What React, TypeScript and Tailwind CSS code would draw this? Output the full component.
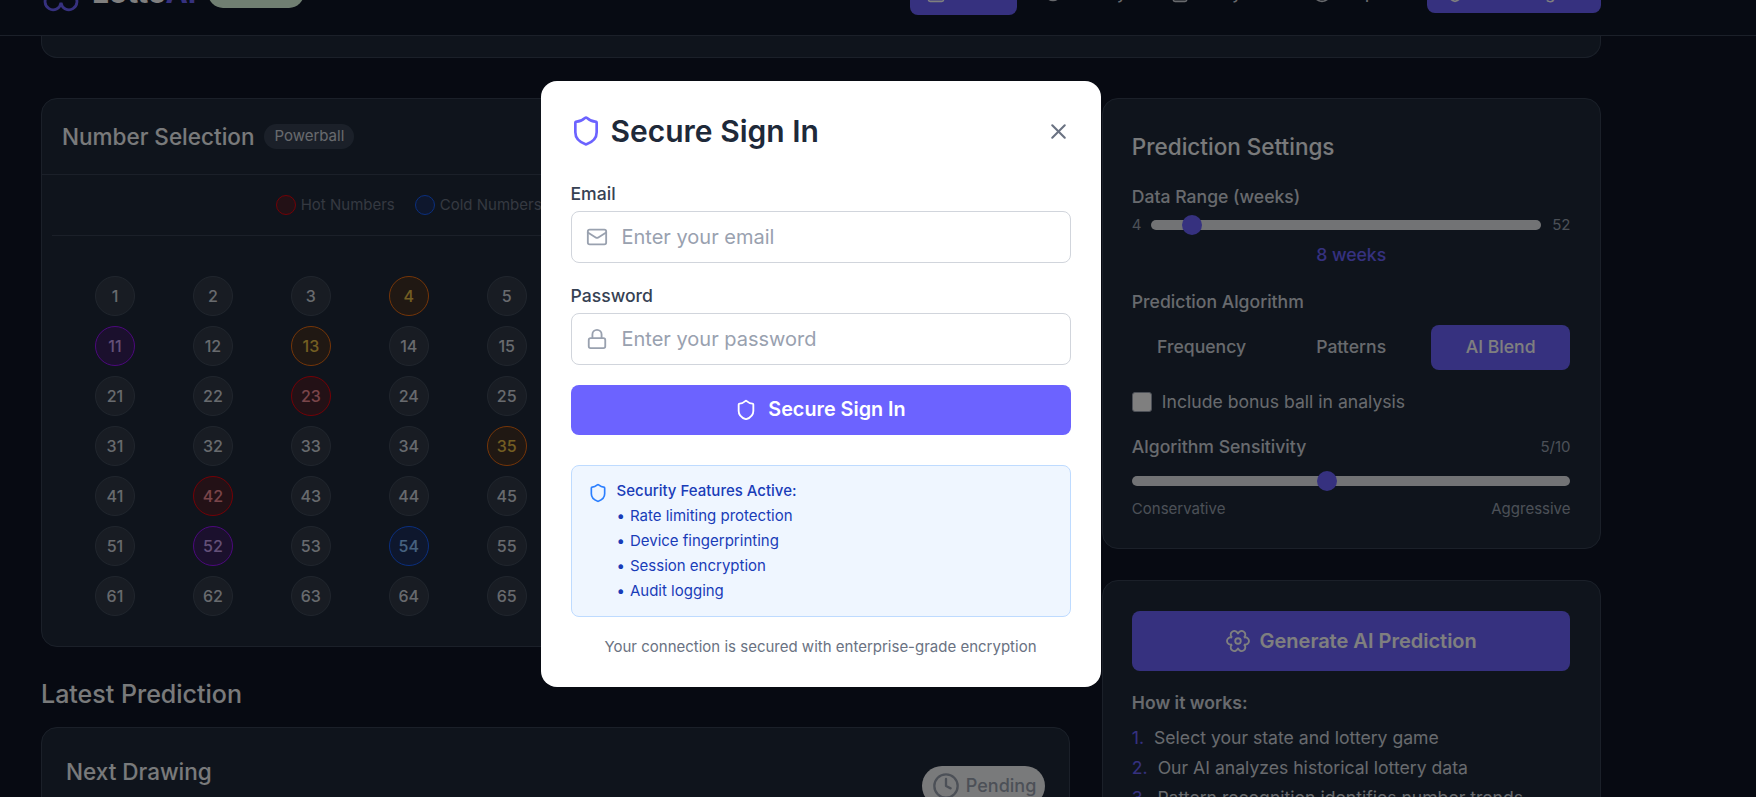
import React from "react";
import { Calendar, CircleHelp, Clock, FileText, History, Lock, Mail, Shield, X } from "lucide-react";

const orange = "bg-yellow-900/40 border-[#ea6a10] text-[#e6bc45]";
const purple = "bg-purple-900/40 border-purple-600 text-[#c8a0f0]";
const red = "bg-red-900/40 border-red-600 text-[#f38b94]";
const blue = "bg-blue-900/40 border-blue-600 text-blue-300";

const hot: Record<number, string> = {
  4: orange,
  13: orange,
  35: orange,
  11: purple,
  52: purple,
  23: red,
  42: red,
  54: blue,
};

const numbers = Array.from({ length: 69 }, (_, i) => i + 1);

// icone a six lobes du logo et du bouton de generation
function FlowerCog({ size, stroke = 2, className }: { size: number; stroke?: number; className?: string }) {
  return (
    <svg width={size} height={size} viewBox="-1 -1 26 26" fill="none" stroke="currentColor" strokeWidth={stroke} className={className}>
      <path d="M12 4.6A4 4 0 1 1 18.41 8.3A4 4 0 1 1 18.41 15.7A4 4 0 1 1 12 19.4A4 4 0 1 1 5.59 15.7A4 4 0 1 1 5.59 8.3A4 4 0 1 1 12 4.6Z" />
      <circle cx="12" cy="12" r="3" />
    </svg>
  );
}

function Legend({ dot, label }: { dot: string; label: string }) {
  return (
    <div className="flex items-center gap-[5px]">
      <span className={`w-5 h-5 rounded-full border ${dot}`} />
      <span className="text-[15px] text-gray-500">{label}</span>
    </div>
  );
}

function NavItem({ icon, label }: { icon: React.ReactNode; label: string }) {
  return (
    <a className="flex items-center gap-2 px-4 h-11 rounded-lg font-medium text-gray-300">
      {icon}
      {label}
    </a>
  );
}

export default function App() {
  return (
    <div className="relative h-screen overflow-hidden bg-[#0e1424] font-['Inter',sans-serif]">
      <div className="w-[1642px]">
        {/* Header, la page est scrollee donc il sort par le haut */}
        <header className="-mt-[50px] h-[86px] w-[1756px] bg-[#0f1626] border-b border-gray-700">
          <div className="w-[1642px] h-full px-[41px] flex items-center justify-between">
            <div className="flex items-center">
              <FlowerCog size={52} stroke={1.4} className="-ml-[6.5px] mb-[10px] text-[#6c63ff]" />
              <span className="ml-[5.5px] text-[30px] font-bold text-white">
                Lotto<span className="text-[#6c63ff]">AI</span>
              </span>
              <span className="ml-3 w-[96px] h-[30px] rounded-full bg-[#e0ffe4]" />
            </div>
            <div className="flex items-center">
              <nav className="flex items-center gap-3 mr-[36px]">
                <a className="flex items-center gap-2 px-4 h-11 w-[107px] -mr-[2px] rounded-lg bg-[#6c63ff] font-medium text-white">
                  <Calendar size={20} />
                  Home
                </a>
                <NavItem icon={<History size={20} />} label="History" />
                <NavItem icon={<FileText size={20} />} label="Analysis" />
                <NavItem icon={<CircleHelp size={20} className="ml-[5px]" />} label="Help" />
              </nav>
              <button className="flex items-center justify-center gap-2 w-[174px] h-10 rounded-lg bg-[#6c63ff] font-medium text-white">
                <Shield size={20} />
                Secure Sign In
              </button>
            </div>
          </div>
        </header>

        <main className="px-[41px]">
          <div className="h-[22px] bg-gray-800 border border-t-0 border-gray-700 rounded-b-2xl" />

          <div className="mt-[40px] grid grid-cols-3 gap-x-8">
            {/* Colonne gauche */}
            <div className="col-span-2">
              <section className="h-[549px] bg-gray-800 border border-gray-700 rounded-2xl">
                <div className="h-[76px] px-[20px] flex items-center gap-[10px] border-b border-gray-700">
                  <h2 className="text-[22.5px] font-medium text-gray-100">Number Selection</h2>
                  <span className="px-[10px] h-[25px] flex items-center rounded-full bg-gray-700 text-[15px] text-gray-300">
                    Powerball
                  </span>
                </div>
                <div className="mx-[10px] pl-[5px] h-[61px] flex items-center justify-center gap-5 border-b border-gray-700">
                  <Legend dot="bg-red-900/40 border-red-600" label="Hot Numbers" />
                  <Legend dot="bg-blue-900/40 border-blue-600" label="Cold Numbers" />
                  <Legend dot="bg-yellow-900/40 border-[#ea6a10]" label="Due Numbers" />
                  <Legend dot="bg-purple-900/40 border-purple-600" label="Lucky Numbers" />
                </div>
                <div className="mt-[40px] px-6 grid grid-cols-10 gap-y-[10px] justify-items-center">
                  {numbers.map((n) => (
                    <div
                      key={n}
                      className={`w-10 h-10 rounded-full border flex items-center justify-center font-[550] ${
                        hot[n] ?? "bg-[#303947] border-[#414b5a] text-gray-300"
                      }`}
                    >
                      {n}
                    </div>
                  ))}
                </div>
              </section>

              <h2 className="mt-[31px] text-[25px] leading-8 font-medium text-gray-100">Latest Prediction</h2>
              <section className="mt-[17px] h-[200px] bg-gray-800 border border-gray-700 rounded-2xl px-[24px] pt-[27px] flex items-start justify-between">
                <h3 className="text-[22.5px] font-medium text-gray-100">Next Drawing</h3>
                <span className="mt-[11px] h-10 pl-[10px] pr-[9px] flex items-center gap-[6px] rounded-full bg-gray-100 text-lg font-medium text-gray-400">
                  <Clock size={28} />
                  Pending
                </span>
              </section>
            </div>

            {/* Colonne droite */}
            <div className="flex flex-col gap-[31px]">
              <section className="h-[451px] bg-gray-800 border border-gray-700 rounded-2xl pl-[28.5px] pr-[29.5px] pt-[32px]">
                <h2 className="text-[22.5px] leading-8 font-medium text-gray-100">Prediction Settings</h2>
                <label className="block mt-[22px] text-[17.6px] font-medium leading-6 text-gray-300">Data Range (weeks)</label>
                <div className="mt-[5px] flex items-center gap-[11px] text-[15px] text-gray-400">
                  <span className="-mr-[2px]">4</span>
                  <div className="relative flex-1 h-[10px] rounded-full bg-gray-200">
                    <span className="absolute left-[31px] -top-[5px] w-5 h-5 rounded-full bg-[#6c63ff]" />
                  </div>
                  <span>52</span>
                </div>
                <p className="mt-[6px] text-center text-[17.6px] leading-6 font-medium text-[#6c63ff]">8 weeks</p>
                <label className="block mt-[23px] text-[17.6px] font-medium leading-6 text-gray-300">Prediction Algorithm</label>
                <div className="mt-[11px] grid grid-cols-3 gap-[10px] text-[17.6px] font-medium">
                  <button className="h-[45px] rounded-lg text-gray-300">Frequency</button>
                  <button className="h-[45px] rounded-lg text-gray-300">Patterns</button>
                  <button className="h-[45px] rounded-lg bg-[#6c63ff] text-white">AI Blend</button>
                </div>
                <div className="mt-[19px] flex items-center gap-[10px]">
                  <span className="w-5 h-5 rounded-[3px] bg-white border border-gray-400" />
                  <span className="text-[17.6px] text-gray-300">Include bonus ball in analysis</span>
                </div>
                <div className="mt-[20px] flex items-center justify-between">
                  <label className="text-[17.6px] font-medium leading-6 text-gray-300">Algorithm Sensitivity</label>
                  <span className="text-[15px] text-gray-400">5/10</span>
                </div>
                <div className="relative mt-[17px] h-[10px] rounded-full bg-gray-200">
                  <span className="absolute left-[185px] -top-[5px] w-5 h-5 rounded-full bg-[#6c63ff]" />
                </div>
                <div className="mt-[12px] flex justify-between text-[15px] text-gray-400">
                  <span>Conservative</span>
                  <span>Aggressive</span>
                </div>
              </section>

              <section className="h-[300px] bg-gray-800 border border-gray-700 rounded-2xl pl-[28.5px] pr-[29.5px] pt-[30px]">
                <button className="w-full h-[60px] rounded-lg bg-[#6c63ff] flex items-center justify-center gap-[10px] text-xl font-semibold text-white">
                  <FlowerCog size={24} />
                  Generate AI Prediction
                </button>
                <h3 className="mt-[20px] text-[17.6px] leading-6 font-semibold text-gray-300">How it works:</h3>
                <ol className="mt-[8px] text-[17.6px] text-gray-300 leading-[30px]">
                  <li><span className="text-[#6c63ff] mr-[10px]">1.</span>Select your state and lottery game</li>
                  <li><span className="text-[#6c63ff] mr-[10px]">2.</span>Our AI analyzes historical lottery data</li>
                  <li><span className="text-[#6c63ff] mr-[10px]">3.</span>Pattern recognition identifies number trends</li>
                </ol>
              </section>
            </div>
          </div>
        </main>
      </div>

      {/* Modale de connexion */}
      <div className="fixed inset-0 bg-black/50">
        <div className="w-[1641px] pt-[81px] flex justify-center">
          <div className="w-[560px] h-[606px] bg-white rounded-2xl p-[30px]">
            <div className="h-[40px] flex items-center justify-between">
              <div className="flex items-center gap-[9px] -ml-[1px]">
                <Shield size={32} className="text-[#6c63ff]" />
                <h2 className="text-[30px] font-semibold text-gray-800">Secure Sign In</h2>
              </div>
              <X size={25} className="text-gray-500" />
            </div>

            <label className="block mt-[31px] text-[17.6px] font-medium leading-6 text-gray-700">Email</label>
            <div className="mt-[5px] h-[52px] border border-gray-300 rounded-lg flex items-center pl-[14px] gap-[14px]">
              <Mail size={22} className="text-gray-400" />
              <span className="text-[20px] text-gray-400">Enter your email</span>
            </div>

            <label className="block mt-[21px] text-[17.6px] font-medium leading-6 text-gray-700">Password</label>
            <div className="mt-[5px] h-[52px] border border-gray-300 rounded-lg flex items-center pl-[14px] gap-[14px]">
              <Lock size={22} className="text-gray-400" />
              <span className="text-[20px] text-gray-400">Enter your password</span>
            </div>

            <button className="mt-[20px] w-full h-[50px] rounded-lg bg-[#6c63ff] flex items-center justify-center gap-[11px] text-[19.8px] font-semibold text-white">
              <Shield size={22} />
              Secure Sign In
            </button>

            <div className="mt-[30px] h-[152px] bg-blue-50 border border-blue-200 rounded-lg pt-[12px] pl-[16px] flex gap-[9px] text-[15px] text-blue-800">
              <Shield size={20} className="mt-[5px] text-blue-500" />
              <div>
                <p className="font-medium leading-[25px]">Security Features Active:</p>
                <ul className="leading-[25px]">
                  <li><span className="mr-[5px]">•</span>Rate limiting protection</li>
                  <li><span className="mr-[5px]">•</span>Device fingerprinting</li>
                  <li><span className="mr-[5px]">•</span>Session encryption</li>
                  <li><span className="mr-[5px]">•</span>Audit logging</li>
                </ul>
              </div>
            </div>

            <p className="mt-[19px] text-center text-[15px] text-gray-500">
              Your connection is secured with enterprise-grade encryption
            </p>
          </div>
        </div>
      </div>
    </div>
  );
}
